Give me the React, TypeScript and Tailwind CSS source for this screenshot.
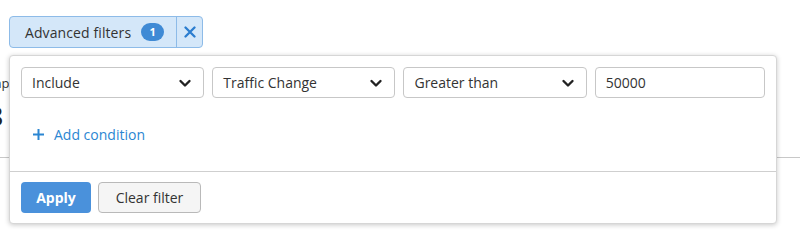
import React from 'react';

function Chevron() {
  return (
    <svg width="14" height="14" viewBox="0 0 14 14" className="shrink-0 text-[#222]">
      <path d="M2.5 5 L7 9.5 L11.5 5" fill="none" stroke="currentColor" strokeWidth="2.4" strokeLinecap="round" strokeLinejoin="round" />
    </svg>
  );
}

function Select({ label, width }: { label: string; width: string }) {
  return (
    <div
      className={`flex h-[31px] items-center justify-between rounded-[4px] border border-[#c7c7c7] bg-white pl-[10px] pr-[11px] text-[14px] text-[#333] ${width}`}
    >
      <span>{label}</span>
      <Chevron />
    </div>
  );
}

export default function App() {
  return (
    <div className="relative h-[241px] w-[800px] overflow-hidden bg-white font-['Open_Sans',sans-serif] text-[#333]">
      {/* filter toggle */}
      <div className="pl-[9px] pt-4">
        <div className="flex h-8 w-[194px] overflow-hidden rounded-[4px] border border-[#8dbbe8] bg-[#d4e7f9]">
          <div className="flex w-[166px] items-center pl-[15px] text-[14px] tracking-[0.1px] text-[#333]">
            <span>Advanced filters</span>
            <span className="ml-[10px] flex h-[18px] w-[23px] items-center justify-center rounded-full bg-[#3f8ad5] text-[11px] font-bold text-white">
              1
            </span>
          </div>
          <div className="flex flex-1 items-center justify-center border-l border-[#8dbbe8]">
            <svg width="12" height="12" viewBox="0 0 12 12">
              <path d="M1.5 1.5 L10.5 10.5 M10.5 1.5 L1.5 10.5" stroke="#2b7dcf" strokeWidth="2.3" strokeLinecap="round" />
            </svg>
          </div>
        </div>
      </div>

      {/* page content under the popup */}
      <div className="mt-[26px] ml-[-22px] text-[13px] leading-[18px] text-[#333]">Jump</div>
      <div className="mt-[10px] ml-[-12px] text-[26px] font-bold leading-[28px] text-[#222]">8</div>
      <div className="mt-[27px] border-t border-[#c8c8c8]" />

      {/* advanced filters popup */}
      <div className="absolute left-[9px] top-[55px] flex w-[768px] flex-col rounded-[4px] border border-[#d6d6d6] bg-white shadow-[0_1px_5px_rgba(0,0,0,0.22)]">
        <div className="flex gap-2 px-[11px] pt-[11px]">
          <Select label="Include" width="w-[184px]" />
          <Select label="Traffic Change" width="w-[184px]" />
          <Select label="Greater than" width="w-[184px]" />
          <div className="flex h-[31px] w-[171px] items-center rounded-[4px] border border-[#c7c7c7] bg-white px-[10px] text-[14px] text-[#333]">
            50000
          </div>
        </div>
        <div className="mt-[26px] mb-[27px] flex h-5 items-center pl-[22px] text-[14px] text-[#2b86d2]">
          <svg width="13" height="13" viewBox="0 0 13 13">
            <path d="M6.5 1 V12 M1 6.5 H12" stroke="#2b86d2" strokeWidth="2" />
          </svg>
          <span className="ml-[9px]">Add condition</span>
        </div>
        <div className="flex gap-[7px] border-t border-[#cfcfcf] px-[11px] pt-[10px] pb-[10px]">
          <button className="h-[31px] w-[70px] rounded-[4px] bg-[#4a91db] text-[14px] font-bold text-white">
            Apply
          </button>
          <button className="h-[31px] w-[103px] rounded-[4px] border border-[#b9b9b9] bg-[#f5f5f5] text-[14px] text-[#333]">
            Clear filter
          </button>
        </div>
      </div>
    </div>
  );
}
